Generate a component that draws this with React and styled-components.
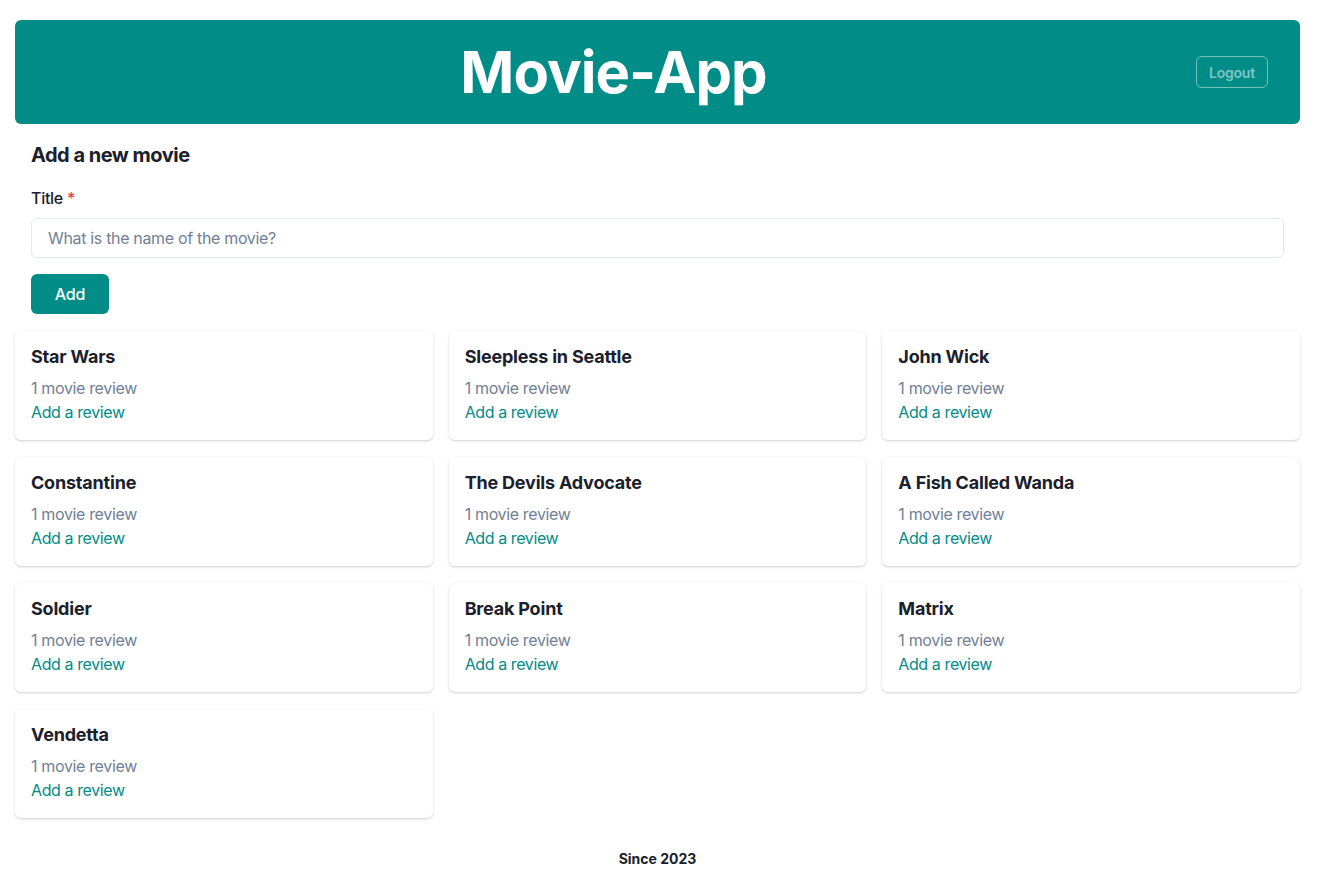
import React from "react";
import styled, { createGlobalStyle } from "styled-components";

const Global = createGlobalStyle`
  * { box-sizing: border-box; }
  body {
    margin: 0;
    background: #ffffff;
    font-family: Inter, "Noto Sans", sans-serif;
    color: #1a202c;
    -webkit-font-smoothing: antialiased;
  }
`;

const TEAL = "#008c87";

const Page = styled.div`
  width: 1285px;
  margin: 20px 0 0 15px;
  display: flex;
  flex-direction: column;
`;

const Header = styled.header`
  height: 104px;
  background: ${TEAL};
  border-radius: 6px;
  display: flex;
  align-items: center;
  padding: 0 32px;
  gap: 16px;
`;

const AppTitle = styled.h1`
  flex: 1;
  margin: 0;
  text-align: center;
  color: #ffffff;
  font-size: 58px;
  letter-spacing: -1px;
  font-weight: 700;
  line-height: 1;
`;

const LogoutButton = styled.button`
  height: 32px;
  padding: 0 12px;
  border: 1px solid rgba(255, 255, 255, 0.45);
  border-radius: 6px;
  background: transparent;
  color: rgba(255, 255, 255, 0.5);
  font-family: Inter, sans-serif;
  font-size: 14px;
  font-weight: 600;
  letter-spacing: -0.2px;
`;

const Form = styled.form`
  padding: 16px 16px 17px;
  display: flex;
  flex-direction: column;
`;

const SectionHeading = styled.h2`
  margin: 0 0 16px;
  font-size: 20px;
  letter-spacing: -0.5px;
  line-height: 30px;
  font-weight: 700;
  color: #1a202c;
`;

const Label = styled.label`
  font-size: 16px;
  font-weight: 500;
  letter-spacing: -0.3px;
  line-height: 24px;
  margin-bottom: 8px;
  color: #1a202c;
`;

const Req = styled.span`
  color: #e53e3e;
  margin-left: 4px;
`;

const Input = styled.input`
  height: 40px;
  width: 100%;
  border: 1px solid #e2e8f0;
  border-radius: 6px;
  padding: 0 16px;
  font-family: Inter, sans-serif;
  font-size: 16px;
  letter-spacing: -0.33px;
  color: #1a202c;
  outline: none;
  &::placeholder { color: #718096; }
`;

const AddButton = styled.button`
  margin-top: 16px;
  align-self: flex-start;
  height: 40px;
  width: 78px;
  border: none;
  border-radius: 6px;
  background: ${TEAL};
  color: #ffffff;
  font-family: Inter, sans-serif;
  font-size: 16px;
  font-weight: 500;
  letter-spacing: -0.2px;
`;

const Grid = styled.div`
  display: grid;
  grid-template-columns: repeat(3, 1fr);
  column-gap: 16px;
  row-gap: 17px;
`;

const Card = styled.div`
  background: #ffffff;
  border-radius: 6px;
  box-shadow: 0 1px 3px rgba(0, 0, 0, 0.12), 0 1px 2px rgba(0, 0, 0, 0.08);
  padding: 12px 16px 16px;
  display: flex;
  flex-direction: column;
`;

const CardTitle = styled.h3`
  margin: 0 0 6px;
  font-size: 18px;
  letter-spacing: -0.2px;
  line-height: 27px;
  font-weight: 700;
  color: #1a202c;
`;

const Meta = styled.div`
  font-size: 16px;
  letter-spacing: -0.35px;
  line-height: 24px;
  color: #718096;
`;

const ReviewLink = styled.a`
  font-size: 16px;
  letter-spacing: -0.4px;
  line-height: 24px;
  color: ${TEAL};
  text-decoration: none;
  cursor: pointer;
`;

const Footer = styled.footer`
  margin-top: 31px;
  text-align: center;
  font-size: 14px;
  font-weight: 700;
  line-height: 20px;
  color: #1a202c;
`;

const movies = [
  "Star Wars",
  "Sleepless in Seattle",
  "John Wick",
  "Constantine",
  "The Devils Advocate",
  "A Fish Called Wanda",
  "Soldier",
  "Break Point",
  "Matrix",
  "Vendetta",
];

export default function App() {
  return (
    <>
      <Global />
      <Page>
        <Header>
          <AppTitle>Movie-App</AppTitle>
          <LogoutButton>Logout</LogoutButton>
        </Header>
        <Form onSubmit={(e) => e.preventDefault()}>
          <SectionHeading>Add a new movie</SectionHeading>
          <Label>
            Title<Req>*</Req>
          </Label>
          <Input placeholder="What is the name of the movie?" />
          <AddButton type="submit">Add</AddButton>
        </Form>
        <Grid>
          {movies.map((m) => (
            <Card key={m}>
              <CardTitle>{m}</CardTitle>
              <Meta>1 movie review</Meta>
              <ReviewLink>Add a review</ReviewLink>
            </Card>
          ))}
        </Grid>
        <Footer>Since 2023</Footer>
      </Page>
    </>
  );
}
